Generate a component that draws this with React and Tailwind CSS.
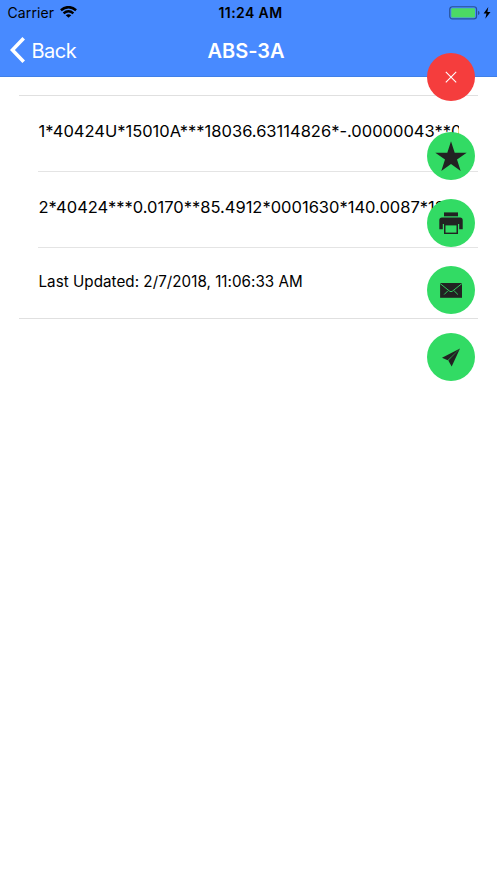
import React from 'react';

const elements = [
  '1*40424U*15010A***18036.63114826*-.00000043**0*0*9995',
  '2*40424***0.0170**85.4912*0001630*140.0087*132.7104*14.8',
];

const WifiIcon = () => (
  <svg width="17" height="12" viewBox="0 0 17 12" fill="none" stroke="#000" strokeWidth="2.5">
    <path d="M0.9 4.3Q8.5 -2 16.1 4.3" />
    <path d="M3.6 7.4Q8.5 3.2 13.4 7.4" />
    <path d="M8.5 11.8L5.7 9.3Q8.5 7 11.3 9.3Z" fill="#000" stroke="none" />
  </svg>
);

const BatteryIcon = () => (
  <svg width="42" height="14" viewBox="0 0 42 14">
    <rect x="0.75" y="0.75" width="26.8" height="12.2" rx="2.6" fill="none" stroke="#285197" strokeWidth="1.2" />
    <rect x="2.3" y="2.3" width="23.7" height="9.1" rx="1" fill="#4cd964" />
    <path d="M29 4.7Q30.6 5.3 30.6 6.9T29 9.1Z" fill="#285197" />
    <path d="M39.3 0.9L34.6 7.6H37.5L36.3 12.8L41.5 6H38.4Z" fill="#000" />
  </svg>
);

const StarIcon = () => (
  <svg width="48" height="48" viewBox="0 0 48 48" fill="#222">
    <path d="M24 9.3L27.7 20.7H39.7L30 27.6L33.7 39L24 32L14.3 39L18 27.6L8.3 20.7H20.3Z" />
  </svg>
);

const PrintIcon = () => (
  <svg width="48" height="48" viewBox="0 0 48 48" fill="#222">
    <path d="M17 13.4H31V17.3H17Z" />
    <path d="M15 18.5H33Q35.7 18.5 35.7 21.2V30.2H32.2V25H15.8V30.2H12.3V21.2Q12.3 18.5 15 18.5Z" />
    <path d="M17 25H31V35H17Z" />
    <path d="M18.5 26.4H29.5V33.6H18.5Z" fill="#32db64" />
  </svg>
);

const MailIcon = () => (
  <svg width="48" height="48" viewBox="0 0 48 48">
    <path d="M13.1 17H35V31.8H13.1Z" fill="#222" />
    <path d="M13.2 17.6L22.5 25.1Q24 26.3 25.5 25.1L34.9 17.6M20.9 24.8L17.2 28.5M27.1 24.8L30.9 28.5" fill="none" stroke="#32db64" strokeWidth="0.9" />
  </svg>
);

const SendIcon = () => (
  <svg width="48" height="48" viewBox="0 0 48 48" fill="#222">
    <path d="M33 15.4L15 24.8L20.7 27.2Z" />
    <path d="M33 15.4L21.3 27.5L24.7 33.4Z" />
  </svg>
);

const CloseIcon = () => (
  <svg width="48" height="48" viewBox="0 0 48 48" fill="none" stroke="#fff" strokeWidth="1.1">
    <path d="M18.8 18.9L29.2 29.3M29.2 18.9L18.8 29.3" />
  </svg>
);

const actions = [
  { label: 'Favorite', Icon: StarIcon },
  { label: 'Print', Icon: PrintIcon },
  { label: 'Email', Icon: MailIcon },
  { label: 'Send', Icon: SendIcon },
];

const App = () => {
  return (
    <div className="relative min-h-screen bg-white font-['Inter',sans-serif] text-black">
      <header className="h-[77px] border-b border-[#4080e8] bg-[#488aff]">
        <div className="grid h-[26px] grid-cols-3 items-center">
          <div className="flex items-center gap-[6px] pb-0.5 pl-[7.5px] text-[14px] tracking-[0.1px]">
            <span>Carrier</span>
            <WifiIcon />
          </div>
          <div className="pb-0.5 pl-1 text-center text-[14px] font-semibold tracking-[0.4px] [font-feature-settings:'calt'_0]">11:24 AM</div>
          <div className="flex justify-end pr-[6px]">
            <BatteryIcon />
          </div>
        </div>
        <div className="grid h-[49px] grid-cols-3 items-center text-white">
          <button aria-label="Back" className="flex items-center gap-[7px] pb-px pl-[9.5px] text-left text-[20px] tracking-[-0.5px]">
            <svg width="15" height="26" viewBox="0 0 15 26" fill="none" stroke="#fff" strokeWidth="3.6">
              <path d="M13.7 1.3L2.4 13L13.7 24.7" />
            </svg>
            <span className="pt-px">Back</span>
          </button>
          <h1 className="-ml-[5px] text-center text-[20px] font-semibold [font-feature-settings:'calt'_0]">ABS-3A</h1>
        </div>
      </header>

      <main className="px-[19px] pt-[18px]">
        <div className="border-y border-[#e0e0e0] pl-[19px] text-[16.5px]">
          {elements.map((line) => (
            <div key={line} className="flex h-[76px] items-center border-b border-[#e4e4e4] pr-[19px]">
              <p className="overflow-hidden whitespace-nowrap pb-1 pl-[0.5px] [font-feature-settings:'calt'_0]">{line}</p>
            </div>
          ))}
          <p className="flex h-[70px] items-center pb-0.5 pl-[0.5px] text-[15.2px] tracking-[0.03px] [font-feature-settings:'calt'_0]">Last Updated: 2/7/2018, 11:06:33 AM</p>
        </div>
      </main>

      {/* Floating action menu, opened */}
      <div className="absolute right-[22px] top-[53px] flex flex-col">
        <button aria-label="Close" className="size-12 rounded-full bg-[#f53d3d]">
          <CloseIcon />
        </button>
        <div className="mt-[31px] flex flex-col gap-[19px]">
          {actions.map(({ label, Icon }) => (
            <button key={label} aria-label={label} className="size-12 rounded-full bg-[#32db64]">
              <Icon />
            </button>
          ))}
        </div>
      </div>
    </div>
  );
};

export default App;
